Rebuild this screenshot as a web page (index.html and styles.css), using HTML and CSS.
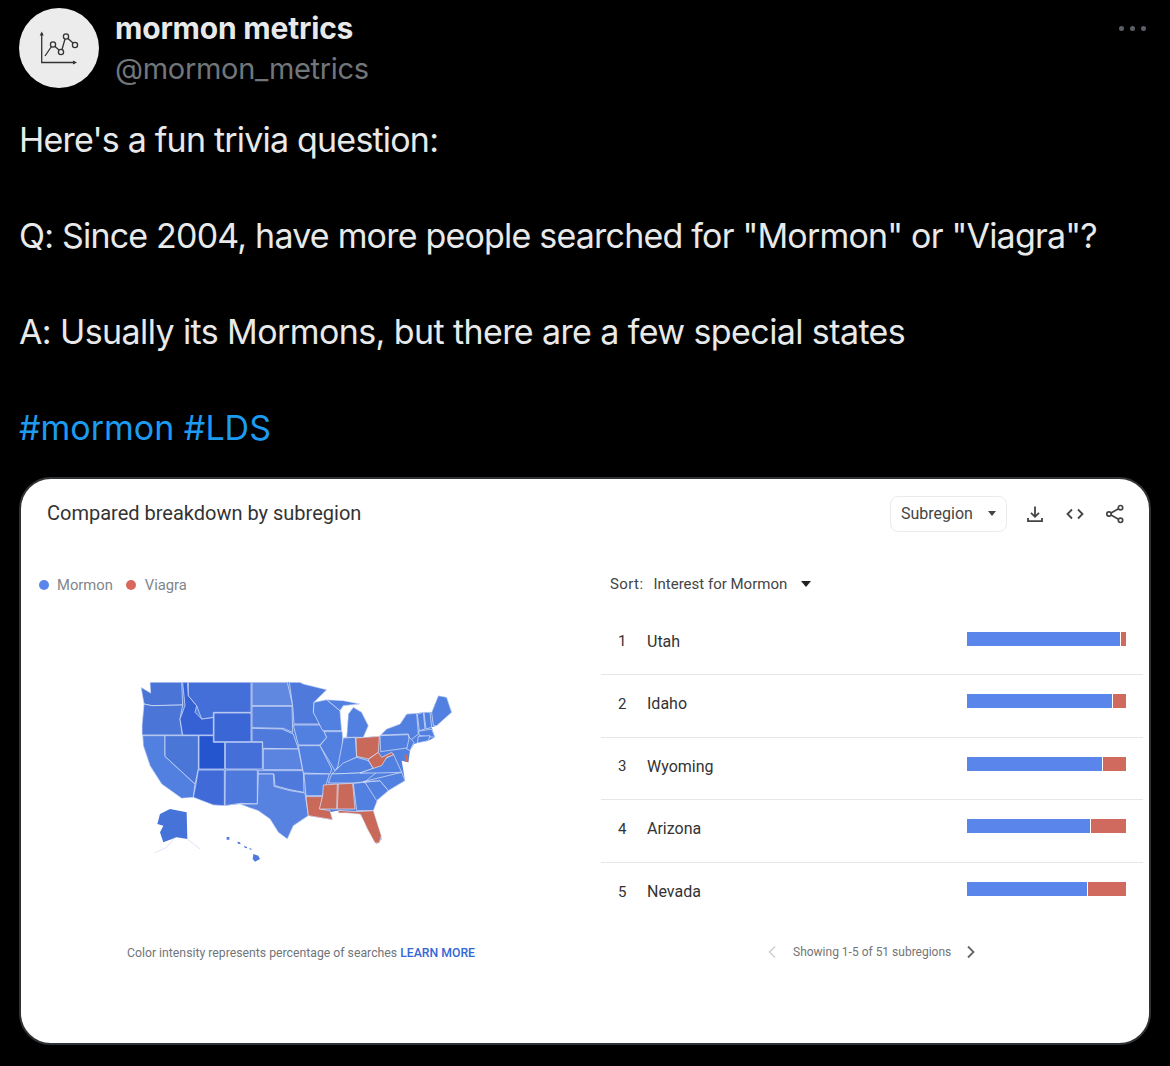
FILE: index.html
```html
<!DOCTYPE html>
<html lang="en">
<head>
<meta charset="utf-8">
<title>mormon metrics</title>
<link rel="stylesheet" href="styles.css">
</head>
<body>
<main class="tweet">
  <header class="author">
    <div class="avatar">
      <svg viewBox="0 0 80 80" width="80" height="80" fill="none" stroke="#333" stroke-width="1.3">
        <path d="M22.7 25V54.500H56"/>
        <path d="M22.7 23.500l-2 4h4zM58 54.500l-4-2v4z" fill="#333" stroke="none"/>
        <path d="M26 48l6.500-9.500M36 38.500l4 3.500M43 41.500l3-10.500M49 30.500l5 4.500"/>
        <circle cx="34" cy="36.500" r="2.600"/><circle cx="42" cy="44" r="2.600"/><circle cx="47" cy="28.500" r="2.600"/><circle cx="56" cy="37" r="2.600"/>
      </svg>
    </div>
    <div class="names">
      <div class="name">mormon metrics</div>
      <div class="handle">@mormon_metrics</div>
    </div>
    <div class="more"><i></i><i></i><i></i></div>
  </header>

  <div class="text">
    <p>Here's a fun trivia question:</p>
    <p>Q: Since 2004, have more people searched for "Mormon" or "Viagra"?</p>
    <p class="answer">A: Usually its Mormons, but there are a few special states</p>
    <p class="tags">#mormon #LDS</p>
  </div>

  <section class="card">
    <div class="card-head">
      <h2 class="card-title">Compared breakdown by subregion</h2>
      <div class="tools">
        <div class="select">Subregion <span class="caret-small"></span></div>
        <svg class="tool" viewBox="0 0 20 20" width="20" height="20" fill="none" stroke="#444" stroke-width="1.800">
          <path d="M10 2.500V12.500M6 8.800l4 4 4-4M3 14v3.200h14V14"/>
        </svg>
        <svg class="tool" viewBox="0 0 20 20" width="20" height="20" fill="none" stroke="#444" stroke-width="1.800">
          <path d="M7 5.500L2.500 10 7 14.500M13 5.500l4.500 4.500L13 14.500"/>
        </svg>
        <svg class="tool" viewBox="0 0 20 20" width="20" height="20" fill="none" stroke="#444" stroke-width="1.700">
          <circle cx="15.500" cy="3.700" r="2.200"/><circle cx="4" cy="10" r="2.200"/><circle cx="15.500" cy="16.300" r="2.200"/>
          <path d="M6 8.900l7.500-4.100M6 11.100l7.500 4.100"/>
        </svg>
      </div>
    </div>
    <div class="card-body">
      <div class="geo">
        <div class="legend">
          <span class="dot dot-blue"></span><span class="legend-label">Mormon</span>
          <span class="dot dot-red"></span><span class="legend-label legend-viagra">Viagra</span>
        </div>
        <svg class="map" viewBox="0 0 990 600" width="330" height="200" stroke="#e4eafa" stroke-width="2" stroke-linejoin="round">
          <path fill="#5280e0" stroke="none" d="M33 55L62 72 60 40 510 40 520 45 590 62 552 100 590 92 640 95 690 105 640 110 630 125 635 185 640 207 650 205 655 135 670 115 695 130 715 170 700 205 748 202 770 180 810 165 830 135 860 133 880 130 905 130 925 80 950 85 965 130 920 170 905 175 915 205 895 215 862 222 852 225 840 245 835 280 815 275 825 335 775 365 740 395 730 425 755 510 740 525 712 475 690 435 650 430 620 425 600 430 605 452 535 440 490 470 472 510 445 490 420 450 385 425 355 415 330 405 285 410 250 408 190 385 155 388 95 345 60 290 40 230 36 170 42 105z"/>
          <g fill="#5280e0">
            <path fill="#4a74d6" d="M33 55L62 72 60 40 155 40 158 108 65 110 42 105z"/>
            <path fill="#4b76d8" d="M42 105L65 110 158 108 150 150 157 198 36 198 36 170z"/>
            <path d="M38 200L105 200 105 262 195 345 190 385 155 388 95 345 60 290 40 230z"/>
            <path fill="#4a76d8" d="M105 200L205 200 205 300 195 345 105 262z"/>
            <path fill="#3561d4" d="M158 40L172 40 175 80 200 110 195 130 215 150 250 145 250 198 158 198 150 150 165 110z"/>
            <path fill="#446fd8" d="M175 40L363 40 363 130 250 130 250 145 215 150 200 110 175 80z"/>
            <path fill="#3b66d6" d="M252 132L363 132 363 218 252 218z"/>
            <path fill="#2554cf" d="M207 200L250 200 250 220 284 220 284 300 207 300z"/>
            <path fill="#456fd8" d="M286 220L397 220 397 300 286 300z"/>
            <path fill="#3f6ad8" d="M205 303L283 303 283 410 250 408 190 385 198 345z"/>
            <path fill="#4d79dc" d="M286 303L382 303 382 405 330 403 285 410z"/>
            <path fill="#6088e0" d="M366 40L472 40 488 110 366 110z"/>
            <path fill="#557fdc" d="M366 112L486 112 488 190 460 178 366 176z"/>
            <path fill="#4f7adc" d="M366 178L455 180 490 195 505 240 398 238 398 218 366 218z"/>
            <path fill="#5a84e0" d="M400 240L505 240 518 302 400 302z"/>
            <path fill="#4f7adc" d="M385 305L520 305 522 370 480 362 435 350 432 315 385 315z"/>
            <path fill="#5882e0" d="M385 315L430 315 432 352 480 365 525 372 535 440 490 470 472 510 445 490 420 450 385 425 355 415 330 405 382 405z"/>
            <path fill="#4f7adc" d="M478 40L510 40 520 45 590 62 552 100 550 130 575 165 492 165 488 110z"/>
            <path d="M490 168L575 168 590 205 570 228 505 228z"/>
            <path d="M505 230L570 230 605 300 600 315 520 312z"/>
            <path d="M522 315L598 315 578 380 528 380z"/>
            <path d="M552 100L590 92 630 125 635 185 578 185 550 130z"/>
            <path d="M582 188L637 188 640 270 615 305 570 230 590 205z"/>
            <path d="M650 205L655 135 670 115 695 130 715 170 700 205z"/>
            <path d="M590 92L640 95 690 105 640 110 630 125z"/>
            <path d="M640 207L676 205 680 265 640 285 622 300z"/>
            <path d="M605 315L640 282 680 265 715 275 730 298 690 312z"/>
            <path d="M595 342L605 315 740 310 705 338 670 342z"/>
            <path d="M670 343L705 340 745 388 730 425 680 425z"/>
            <path d="M705 340L750 335 775 365 740 395z"/>
            <path d="M700 338L815 310 825 335 775 365 750 335z"/>
            <path d="M690 312L730 298 765 270 790 255 815 310 740 312z"/>
            <path d="M750 200L835 197 845 235 752 248z"/>
            <path d="M770 180L810 165 830 135 860 133 865 195 840 215 835 195 752 198z"/>
            <path d="M838 205L852 220 840 245 830 240z"/>
            <path d="M862 135L880 130 885 180 868 185z"/>
            <path d="M882 130L900 130 905 175 888 180z"/>
            <path d="M905 130L925 80 950 85 965 130 920 170 910 170z"/>
            <path d="M865 187L905 180 915 205 868 200z"/>
            <path d="M865 202L900 200 895 215 862 222z"/>
            <path fill="#4673d8" stroke="none" d="M90 435L120 420 170 430 172 510 140 505 100 520 90 490 100 470 82 465z"/>
            <path fill="#4f7adc" stroke="none" d="M370 555L385 560 390 570 375 578 368 570zM290 504h8v8h-8zM322 518l8 2 2 6-8-2zM342 531l8 2 2 5-8-2zM358 537l6 2 1 4-6-2z"/>
          </g>
          <path d="M172 510L210 540M135 505L110 535 75 552" fill="none" stroke="#c8d6f4" stroke-width="2"/>
          <g fill="#c9695a">
            <path d="M528 383L578 383 570 420 600 425 608 452 535 440z"/>
            <path d="M580 348L622 345 620 420 568 420 578 380z"/>
            <path d="M625 345L668 343 675 420 622 420z"/>
            <path d="M625 424L680 428 730 425 754 500 748 522 735 522 712 480 692 436 650 432 625 432z"/>
            <path d="M678 207L748 202 745 250 715 270 680 262z"/>
            <path d="M714 272L745 250 755 265 785 250 790 258 770 265 755 290 730 298z"/>
            <path stroke="none" d="M824 256L834 258 835 280 826 278z"/>
          </g>
        </svg>
        <div class="geo-note">Color intensity represents percentage of searches <a class="learn">LEARN MORE</a></div>
      </div>
      <div class="ranking">
        <div class="sort"><span class="sort-label">Sort:</span><span class="sort-value">Interest for Mormon</span><span class="caret"></span></div>
        <ol class="rows">
          <li class="row"><span class="rank">1</span><span class="state">Utah</span><span class="bar"><b class="blue" style="width:153px"></b><b class="red" style="width:5px"></b></span></li>
          <li class="row"><span class="rank">2</span><span class="state">Idaho</span><span class="bar"><b class="blue" style="width:145px"></b><b class="red" style="width:13px"></b></span></li>
          <li class="row"><span class="rank">3</span><span class="state">Wyoming</span><span class="bar"><b class="blue" style="width:135px"></b><b class="red" style="width:23px"></b></span></li>
          <li class="row"><span class="rank">4</span><span class="state">Arizona</span><span class="bar"><b class="blue" style="width:123px"></b><b class="red" style="width:35px"></b></span></li>
          <li class="row"><span class="rank">5</span><span class="state">Nevada</span><span class="bar"><b class="blue" style="width:120px"></b><b class="red" style="width:38px"></b></span></li>
        </ol>
        <div class="pager">
          <svg viewBox="0 0 10 14" width="10" height="14" fill="none" stroke="#d0d0d0" stroke-width="1.600"><path d="M8 1.500L2.500 7 8 12.500"/></svg>
          <span>Showing 1-5 of 51 subregions</span>
          <svg viewBox="0 0 10 14" width="10" height="14" fill="none" stroke="#666" stroke-width="1.800"><path d="M2 1.500L7.500 7 2 12.500"/></svg>
        </div>
      </div>
    </div>
  </section>
</main>
</body>
</html>
```

FILE: styles.css
```css
* { box-sizing: border-box; }
html, body { margin: 0; background: #000; }
body { height: 1066px; overflow: hidden; font-family: Inter, "Liberation Sans", sans-serif; color: #e7e9ea; }
.tweet { padding: 8px 19px 0 19px; }
.author { display: flex; height: 80px; }
.avatar { width: 80px; height: 80px; border-radius: 50%; background: #ececec; }
.avatar svg { display: block; }
.names { margin-left: 16px; }
.name { font-size: 30px; font-weight: 700; line-height: 40px; letter-spacing: -0.2px; color: #e7e9ea; }
.handle { font-size: 29px; line-height: 40px; letter-spacing: -0.3px; color: #71767b; padding-top: 1px; }
.more { margin-left: auto; margin-right: 5px; margin-top: 18px; display: flex; gap: 6px; height: 5px; }
.more i { width: 5px; height: 5px; border-radius: 50%; background: #5b6066; }
.text { margin-top: 28px; font-size: 34px; line-height: 48px; letter-spacing: -0.8px; }
.text p { margin: 0 0 48px; }
.text p.answer { letter-spacing: -0.6px; }
.text p.tags { margin: 0; letter-spacing: 0; color: #1d9bf0; }
.card { margin-top: 25px; height: 568px; width: 1132px; background: #fff; border: 2px solid #2f3336; border-radius: 32px; font-family: Roboto, sans-serif; overflow: hidden; }
.card-head { display: flex; justify-content: space-between; padding: 16px 24px 0 26px; height: 53px; }
.card-title { margin: 0; font-size: 20px; font-weight: 400; line-height: 36px; color: #333; }
.tools { display: flex; align-items: center; height: 36px; padding-top: 1px; }
.tool { margin-left: 20px; display: block; }
.select { width: 117px; height: 36px; border: 1px solid #ebebeb; border-radius: 8px; padding: 0 10px; font-size: 16px; color: #444; display: flex; align-items: center; justify-content: space-between; margin-right: -2px; }
.caret-small { width: 0; height: 0; border: 4px solid transparent; border-top: 5px solid #444; border-bottom: 0; }
.card-body { display: grid; grid-template-columns: 580px 1fr; }
.geo { padding-left: 18px; }
.legend { display: flex; align-items: center; height: 20px; margin-top: 43px; font-size: 14.750px; color: #80868b; }
.dot { width: 10px; height: 10px; border-radius: 50%; }
.dot-blue { background: #5a86ec; }
.dot-red { background: #d9685c; margin-left: 13px; }
.legend-label { margin-left: 8px; }
.legend-viagra { margin-left: 9px; }
.map { display: block; margin: 74px 0 0 91px; filter: blur(0.25px); }
.geo-note { margin: 76px 0 0 88px; font-size: 12.250px; line-height: 16px; color: #70757a; white-space: nowrap; }
.learn { color: #3367d6; font-weight: 500; }
.ranking { padding: 0 6px 0 0; }
.sort { display: flex; align-items: center; height: 20px; margin: 42px 0 0 9px; font-size: 15px; color: #444; }
.sort-label { letter-spacing: 0.4px; }
.sort-value { margin-left: 10px; }
.caret { margin-left: 14px; width: 0; height: 0; border: 5.500px solid transparent; border-top: 6px solid #222; border-bottom: 0; }
.rows { list-style: none; margin: 18.500px 0 0; padding: 0; }
.row { height: 62.500px; display: flex; align-items: center; padding: 0 17px 4px 17px; border-bottom: 1px solid #e6e6e6; font-size: 16px; color: #333; }
.row:last-child { border-bottom: 0; }
.rank { width: 29px; font-size: 15px; }
.state { flex: 1; }
.bar { display: flex; gap: 1px; height: 14px; width: 159px; margin-top: -5px; }
.bar b { display: block; height: 14px; }
.blue { background: #5a86ec; }
.red { background: #d0695e; }
.pager { display: flex; align-items: center; margin: 18.500px 0 0 166px; height: 16px; font-size: 12px; color: #757575; }
.pager svg { display: block; }
.pager span { margin: 0 15px 0 16px; }
```
